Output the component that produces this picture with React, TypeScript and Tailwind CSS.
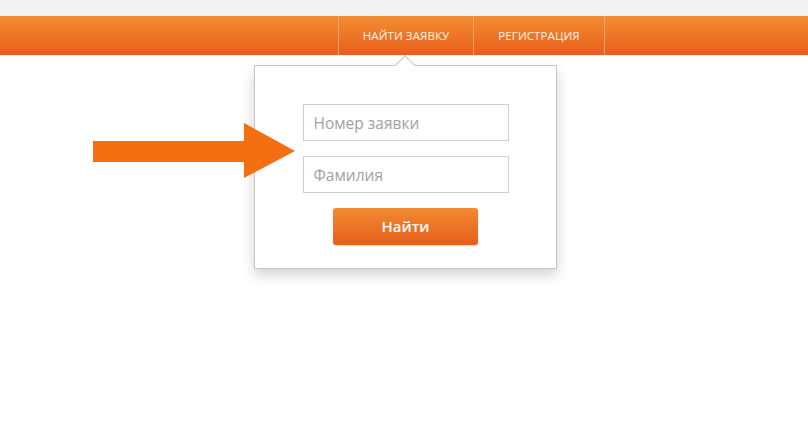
import React from "react";

const font = { fontFamily: '"Open Sans", "Noto Sans", Arial, sans-serif' };

export default function App() {
    return (
        <div className="relative w-[808px] h-[424px] bg-white overflow-hidden" style={font}>
            {/* top strip */}
            <div className="h-4 bg-[#f3f3f3]" />

            {/* orange nav bar */}
            <div className="h-[39px] flex bg-gradient-to-b from-[#f38d31] to-[#e75d1b]">
                <div className="w-[338px]" />
                <div className="w-px bg-[#f6a266]" />
                <div className="w-[134px] flex items-center justify-center text-[11.5px] text-[#fff4e8] tracking-[0.1px]">
                    НАЙТИ ЗАЯВКУ
                </div>
                <div className="w-px bg-[#f6a266]" />
                <div className="w-[130px] flex items-center justify-center text-[11.5px] text-[#fff4e8] tracking-[0.1px]">
                    РЕГИСТРАЦИЯ
                </div>
                <div className="w-px bg-[#f6a266]" />
            </div>

            {/* dropdown popup */}
            <div className="absolute left-[254px] top-[65px] w-[303px] h-[204px] bg-white border border-[#c6c6c6] shadow-[0_6px_12px_rgba(0,0,0,0.18)] flex flex-col items-center pt-[38px] gap-[15px]">
                {/* caret */}
                <div className="absolute left-[143px] -top-[8px] w-[14px] h-[14px] bg-white border-l border-t border-[#c6c6c6] rotate-45" />
                <div className="w-[206px] h-[37px] border border-[#cfcfcf] flex items-center px-[10px] pt-[2px] text-[15.5px] text-[#a2a2a2]">
                    Номер заявки
                </div>
                <div className="w-[206px] h-[37px] border border-[#cfcfcf] flex items-center px-[10px] pt-[2px] text-[15.5px] text-[#a2a2a2]">
                    Фамилия
                </div>
                <button className="w-[145px] h-[37px] rounded-[3px] bg-gradient-to-b from-[#f28a30] to-[#e65e1b] text-white text-[15px] font-semibold shadow-[0_1px_2px_rgba(0,0,0,0.15)]">
                    Найти
                </button>
            </div>

            {/* big arrow */}
            <svg className="absolute left-[93px] top-[123px]" width="202" height="56" viewBox="0 0 202 56">
                <polygon points="0,18 151,18 151,0 202,28 151,55 151,39 0,39" fill="#f46f12" />
            </svg>
        </div>
    );
}
